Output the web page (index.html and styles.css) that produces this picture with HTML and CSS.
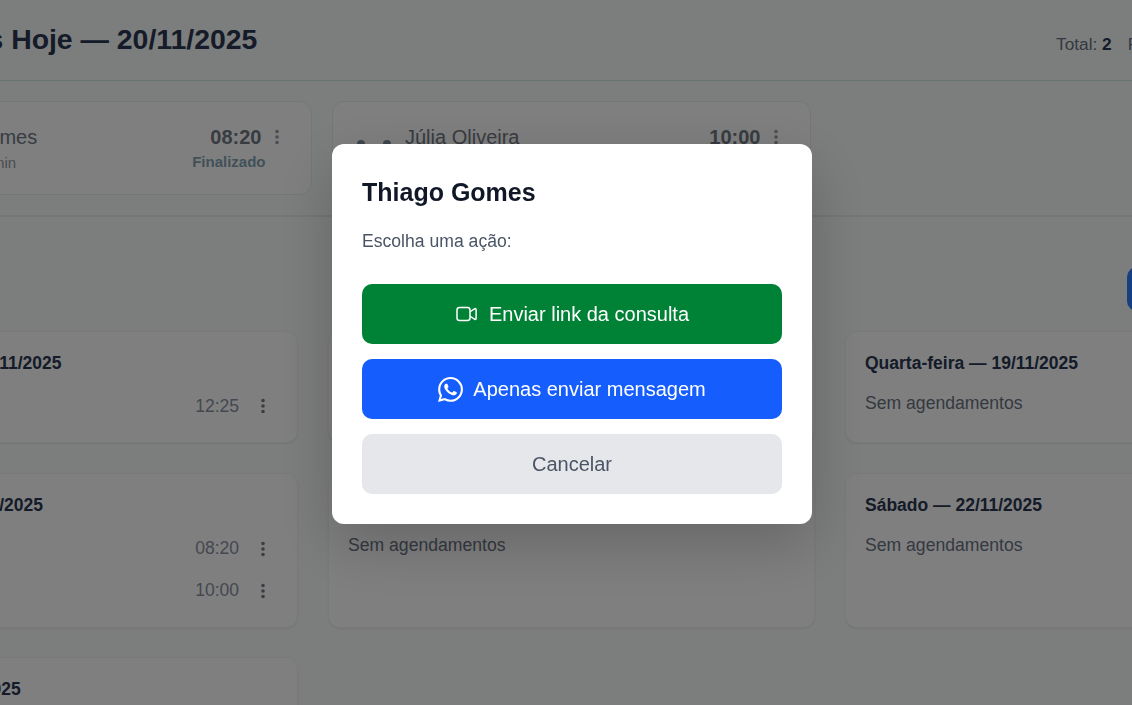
FILE: index.html
```html
<!DOCTYPE html>
<html lang="pt-BR">
<head>
<meta charset="utf-8">
<title>Consultas</title>
<link rel="stylesheet" href="styles.css">
</head>
<body>
<main class="page">
  <header class="topbar">
    <h1 class="topbar-title">Consultas Hoje — 20/11/2025</h1>
    <div class="topbar-stats"><span>Total: <b>2</b></span><span>Finalizados: <b>1</b></span></div>
  </header>
  <section class="today">
    <article class="today-card">
      <div class="dots-row"><span class="dot"></span><span class="dot"></span></div>
      <div class="today-info"><div class="today-name">Thiago Gomes</div><div class="today-sub">Duração: 30 min</div></div>
      <div class="today-side">
        <div class="today-time">08:20 <svg class="kebab" viewBox="0 0 4 16"><circle cx="2" cy="2.5" r="1.8"/><circle cx="2" cy="8" r="1.8"/><circle cx="2" cy="13.5" r="1.8"/></svg></div>
        <div class="today-status">Finalizado</div>
      </div>
    </article>
    <article class="today-card">
      <div class="dots-row"><span class="dot"></span><span class="dot"></span></div>
      <div class="today-info"><div class="today-name">Júlia Oliveira</div><div class="today-sub">Duração: 30 min</div></div>
      <div class="today-side">
        <div class="today-time">10:00 <svg class="kebab" viewBox="0 0 4 16"><circle cx="2" cy="2.5" r="1.8"/><circle cx="2" cy="8" r="1.8"/><circle cx="2" cy="13.5" r="1.8"/></svg></div>
        <div class="today-status">Agendado</div>
      </div>
    </article>
  </section>
  <div class="week-bar"><button class="week-btn">Novo agendamento</button></div>
  <section class="week">
    <article class="day">
      <h2 class="day-title">Segunda-feira — 17/11/2025</h2>
      <div class="slot"><span>Marina Costa</span><time>12:25</time><svg class="kebab" viewBox="0 0 4 16"><circle cx="2" cy="2.5" r="1.8"/><circle cx="2" cy="8" r="1.8"/><circle cx="2" cy="13.5" r="1.8"/></svg></div>
    </article>
    <article class="day">
      <h2 class="day-title">Terça-feira — 18/11/2025</h2>
      <p class="empty">Sem agendamentos</p>
    </article>
    <article class="day">
      <h2 class="day-title">Quarta-feira — 19/11/2025</h2>
      <p class="empty">Sem agendamentos</p>
    </article>
    <article class="day">
      <h2 class="day-title">Quinta-feira — 20/11/2025</h2>
      <div class="slot"><span>Thiago Gomes</span><time>08:20</time><svg class="kebab" viewBox="0 0 4 16"><circle cx="2" cy="2.5" r="1.8"/><circle cx="2" cy="8" r="1.8"/><circle cx="2" cy="13.5" r="1.8"/></svg></div>
      <div class="slot"><span>Júlia Oliveira</span><time>10:00</time><svg class="kebab" viewBox="0 0 4 16"><circle cx="2" cy="2.5" r="1.8"/><circle cx="2" cy="8" r="1.8"/><circle cx="2" cy="13.5" r="1.8"/></svg></div>
    </article>
    <article class="day">
      <h2 class="day-title">Sexta-feira — 21/11/2025</h2>
      <p class="empty">Sem agendamentos</p>
    </article>
    <article class="day">
      <h2 class="day-title">Sábado — 22/11/2025</h2>
      <p class="empty">Sem agendamentos</p>
    </article>
    <article class="day">
      <h2 class="day-title">Domingo — 23/11/2025</h2>
      <p class="empty">Sem agendamentos</p>
    </article>
  </section>
</main>
<div class="overlay">
  <div class="modal">
    <h2 class="modal-title">Thiago Gomes</h2>
    <p class="modal-text">Escolha uma ação:</p>
    <div class="modal-actions">
      <button class="action action-green">
        <svg class="icon-video" viewBox="0 0 22 16" fill="none" stroke="currentColor" stroke-width="1.5" stroke-linecap="round" stroke-linejoin="round"><rect x="1" y="1.5" width="13" height="13" rx="2.5"/><path d="M14.5 5.5L18.5 2.8a1 1 0 0 1 1.6.8v8.8a1 1 0 0 1-1.6.8L14.5 10.5"/></svg>
        Enviar link da consulta
      </button>
      <button class="action action-blue">
        <svg class="icon-wa" viewBox="0 0 24 24" fill="currentColor"><path d="M17.47 14.38c-.3-.15-1.76-.87-2.03-.97-.27-.1-.47-.15-.67.15-.2.3-.77.97-.94 1.16-.17.2-.35.22-.65.08-.3-.15-1.26-.46-2.39-1.47-.88-.79-1.48-1.76-1.65-2.06-.17-.3-.02-.46.13-.61.13-.13.3-.35.45-.52.15-.17.2-.3.3-.5.1-.2.05-.37-.03-.52-.07-.15-.67-1.61-.92-2.21-.24-.58-.49-.5-.67-.51h-.57c-.2 0-.52.07-.79.37-.27.3-1.04 1.02-1.04 2.48s1.07 2.88 1.21 3.07c.15.2 2.1 3.2 5.08 4.49.71.31 1.26.49 1.69.63.71.22 1.36.19 1.87.12.57-.09 1.76-.72 2.01-1.41.25-.7.25-1.29.17-1.41-.07-.13-.27-.2-.57-.35z"/><path d="M12.05 21.79h-.01a9.87 9.87 0 0 1-5.03-1.38l-.36-.21-3.74.98 1-3.65-.24-.37a9.86 9.86 0 0 1-1.51-5.26c0-5.45 4.44-9.88 9.89-9.88 2.64 0 5.12 1.03 6.99 2.9a9.83 9.83 0 0 1 2.89 6.99c0 5.45-4.44 9.88-9.88 9.88zM20.46 3.49A11.82 11.82 0 0 0 12.05 0C5.5 0 .16 5.34.16 11.89c0 2.1.55 4.14 1.59 5.95L.06 24l6.3-1.65a11.88 11.88 0 0 0 5.68 1.45h.01c6.55 0 11.89-5.34 11.89-11.89a11.82 11.82 0 0 0-3.48-8.42z"/></svg>
        Apenas enviar mensagem
      </button>
      <button class="action action-gray">Cancelar</button>
    </div>
  </div>
</div>
</body>
</html>
```
FILE: styles.css
```css
* { box-sizing: border-box; }
html, body { margin: 0; height: 705px; overflow: hidden; }
body { background: #f9fcfa; font-family: "Liberation Sans", Arial, sans-serif; color: #101828; }

.page { width: 1521px; margin-left: -189px; }

.topbar { height: 81px; display: flex; justify-content: space-between; align-items: flex-start; padding: 21px 0 0 0; border-bottom: 1px solid #cfe8e6; }
.topbar-title { margin: 0; font-size: 28.4px; line-height: 36px; font-weight: 700; color: #2a3650; padding-left: 55px; }
.topbar-stats { display: flex; gap: 16px; font-size: 17.3px; color: #6a7282; padding: 13px 0 0 0; width: 276px; white-space: nowrap; }
.topbar-stats b { color: #2a3650; }

.today { height: 136px; padding: 20px 0 0 22px; display: grid; grid-template-columns: repeat(3, 478.5px); column-gap: 20.5px; align-items: start; border-bottom: 2px solid #e6eef0; }
.today-card { height: 94px; background: #fff; border: 1px solid #e5e7eb; border-radius: 12px; display: flex; padding: 22px 32px 0 24px; opacity: .7; }
.dots-row { display: flex; gap: 18px; width: 48px; padding-top: 16px; }
.dot { width: 8px; height: 8px; border-radius: 50%; background: #4a6070; }
.today-info { flex: 1; }
.today-name { font-size: 20px; line-height: 26px; color: #364153; }
.today-sub { font-size: 15px; line-height: 22px; color: #6a7282; margin-top: 2px; }
.today-side { display: flex; flex-direction: column; align-items: flex-end; }
.today-time { font-size: 20px; line-height: 26px; font-weight: 700; color: #364153; display: flex; align-items: center; gap: 13px; }
.today-status { font-size: 15px; line-height: 20px; font-weight: 700; color: #4f7c96; padding-right: 13px; margin-top: 2px; }
.kebab { width: 4px; height: 16px; fill: #767a88; flex: none; }
.today-time .kebab { fill: #6a7282; }

.week-bar { height: 114px; display: flex; justify-content: flex-end; padding-top: 50px; }
.week-btn { width: 205px; height: 44px; border: 0; border-radius: 10px; background: #2b7fff; color: #fff; font: 700 16px "Liberation Sans", Arial, sans-serif; }

.week { display: grid; grid-template-columns: repeat(3, 487px); column-gap: 30px; row-gap: 29.7px; align-items: stretch; }
.day { background: #fff; border-radius: 12px; border: 1px solid #f3f4f6; box-shadow: 0 1px 2px rgba(0,0,0,.08); padding: 19px 19px 15.1px; }
.day-title { margin: 0; font-size: 17.5px; line-height: 24px; font-weight: 700; color: #2a3650; }
.empty { margin: 16px 0 0; font-size: 17.6px; line-height: 24px; color: #6a7282; }
.slot { display: flex; align-items: center; height: 42px; font-size: 17.5px; color: #8a90a0; }
.day-title + .slot { margin-top: 10.4px; }
.slot span { flex: 1; }
.slot .kebab { margin: 0 13px 0 22px; }

.overlay { position: fixed; inset: 0; background: rgba(0,0,0,.5); display: flex; align-items: center; justify-content: center; }
.modal { width: 480px; height: 380px; padding: 30px; background: #fff; border-radius: 12px; box-shadow: 0 20px 60px rgba(0,0,0,.2); margin-left: 12px; margin-top: -37px; }
.modal-title { margin: 0; font-size: 25px; line-height: 36px; font-weight: 700; color: #101828; }
.modal-text { margin: 19px 0 0; font-size: 17.6px; line-height: 24px; color: #4a5565; }
.modal-actions { display: flex; flex-direction: column; gap: 15px; margin-top: 31px; }
.action { height: 60px; border: 0; border-radius: 10px; font: 20px "Liberation Sans", Arial, sans-serif; display: flex; align-items: center; justify-content: center; gap: 11px; padding: 0; }
.action-green { background: #008236; color: #fff; padding-left: 1px; }
.action-blue { background: #155dfc; color: #fff; gap: 10px; }
.action-gray { background: #e5e7eb; color: #4a5565; }
.icon-video { width: 22px; height: 16px; }
.icon-wa { width: 25px; height: 25px; }
```
